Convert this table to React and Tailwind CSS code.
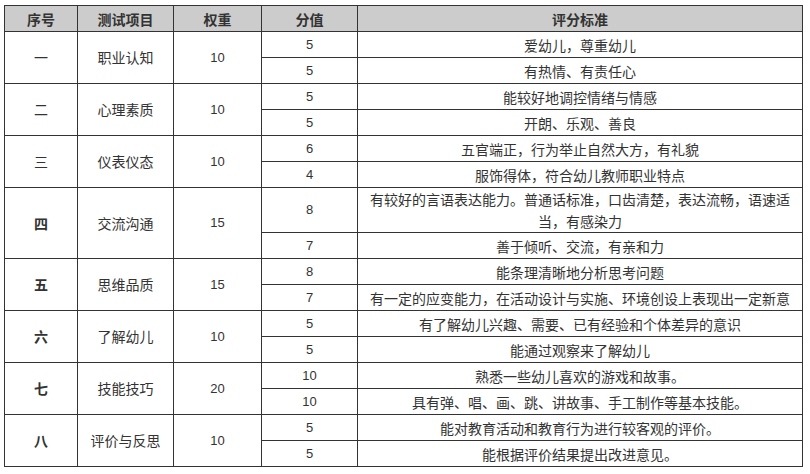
import React from "react";

const groups = [
  { no: "一", bold: false, item: "职业认知", w: "10", rows: [["5", "爱幼儿，尊重幼儿"], ["5", "有热情、有责任心"]] },
  { no: "二", bold: false, item: "心理素质", w: "10", rows: [["5", "能较好地调控情绪与情感"], ["5", "开朗、乐观、善良"]] },
  { no: "三", bold: false, item: "仪表仪态", w: "10", rows: [["6", "五官端正，行为举止自然大方，有礼貌"], ["4", "服饰得体，符合幼儿教师职业特点"]] },
  {
    no: "四", bold: true, item: "交流沟通", w: "15",
    rows: [["8", <>有较好的言语表达能力。普通话标准，口齿清楚，表达流畅，语速适<br />当，有感染力</>], ["7", "善于倾听、交流，有亲和力"]],
  },
  { no: "五", bold: true, item: "思维品质", w: "15", rows: [["8", "能条理清晰地分析思考问题"], ["7", "有一定的应变能力，在活动设计与实施、环境创设上表现出一定新意"]] },
  { no: "六", bold: true, item: "了解幼儿", w: "10", rows: [["5", "有了解幼儿兴趣、需要、已有经验和个体差异的意识"], ["5", "能通过观察来了解幼儿"]] },
  { no: "七", bold: true, item: "技能技巧", w: "20", rows: [["10", "熟悉一些幼儿喜欢的游戏和故事。"], ["10", "具有弹、唱、画、跳、讲故事、手工制作等基本技能。"]] },
  { no: "八", bold: true, item: "评价与反思", w: "10", rows: [["5", "能对教育活动和教育行为进行较客观的评价。"], ["5", "能根据评价结果提出改进意见。"]] },
];

const cjk = "font-['SimSun','Noto_Sans_CJK_SC',sans-serif]";

export default function App() {
  return (
    <div className="w-[810px] h-[474px] bg-white pt-[5px] pl-[4px]">
      <div
        className={`grid w-[799px] grid-cols-[72px_95px_87px_95px_444px] grid-rows-[repeat(7,25px)_44px_repeat(9,25px)] gap-px bg-[#333333] p-px text-[#333333] ${cjk}`}
      >
        {["序号", "测试项目", "权重", "分值", "评分标准"].map((h) => (
          <div key={h} className="flex items-center justify-center bg-[#cccccc] text-[14px] font-bold leading-none">
            {h}
          </div>
        ))}
        {groups.map((g, gi) => (
          <React.Fragment key={gi}>
            <div className={`row-span-2 flex items-center justify-center bg-white text-[14px] ${g.bold ? "font-bold" : ""}`}>{g.no}</div>
            <div className="row-span-2 flex items-center justify-center bg-white text-[14px]">{g.item}</div>
            <div className="row-span-2 flex items-center justify-center bg-white text-[13px] font-['Liberation_Sans',sans-serif]">{g.w}</div>
            {g.rows.map((r, ri) => (
              <React.Fragment key={ri}>
                <div className="flex items-center justify-center bg-white text-[13px] font-['Liberation_Sans',sans-serif]">{r[0]}</div>
                <div className="flex items-center justify-center bg-white text-center text-[14px] leading-[22px]">{r[1]}</div>
              </React.Fragment>
            ))}
          </React.Fragment>
        ))}
      </div>
    </div>
  );
}
